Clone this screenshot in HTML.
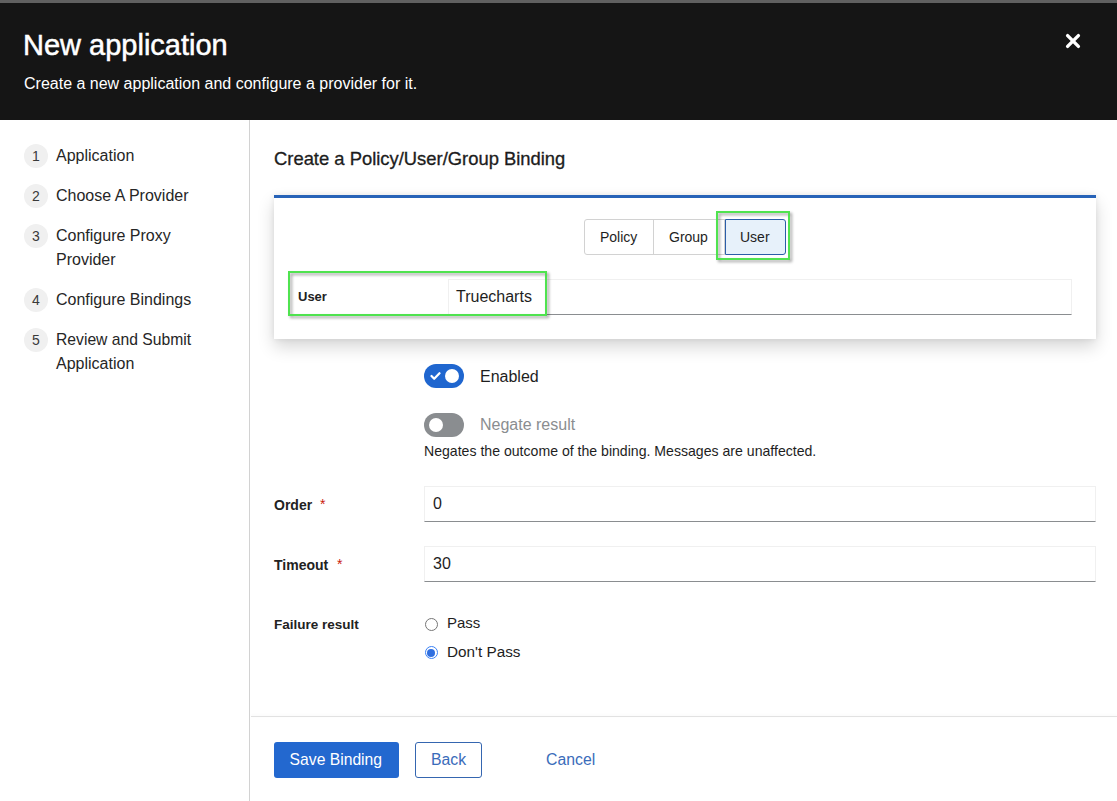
<!DOCTYPE html>
<html><head><meta charset="utf-8">
<style>
html,body{margin:0;padding:0;width:1117px;height:801px;overflow:hidden;background:#fff;font-family:"Liberation Sans",sans-serif;color:#1e1e1e;}
.a{position:absolute;}
.t{position:absolute;line-height:1;white-space:nowrap;}
#strip{left:0;top:0;width:1117px;height:3px;background:#606060;}
#hdr{left:0;top:3px;width:1117px;height:117px;background:#151515;}
#nav{left:0;top:120px;width:249px;height:681px;border-right:1px solid #d2d2d2;}
.num{position:absolute;left:24px;width:24px;height:24px;border-radius:50%;background:#f0f0f0;}
.nt{font-size:16px;color:#262626;left:56px;}
.dg{font-size:14px;color:#3a3a3a;}
#card{left:274px;top:195px;width:822px;height:144px;background:#fff;box-shadow:0 8px 16px 0 rgba(3,3,3,.16),0 0 6px 0 rgba(3,3,3,.08);}
#cardbar{left:274px;top:195px;width:822px;height:3px;background:#2763b8;}
.tg{position:absolute;top:219px;height:36px;box-sizing:border-box;border:1px solid #d2d2d2;background:#fff;}
.inp{position:absolute;box-sizing:border-box;background:#fff;border:1px solid #f0f0f0;border-bottom:1px solid #8a8d90;}
.green{position:absolute;box-sizing:border-box;border:2px solid #4fe34f;filter:drop-shadow(2.5px 2.5px 1.5px rgba(0,0,0,.38));}
.lbl{font-size:14px;font-weight:bold;color:#222;}
.req{color:#c9190b;font-size:14px;}
.sw{position:absolute;left:424px;width:40px;height:24px;border-radius:12px;}
.knob{position:absolute;top:4.7px;width:14.6px;height:14.6px;border-radius:50%;background:#fff;}
#footline{left:251px;top:716px;width:866px;height:1px;background:#e2e2e2;box-shadow:0 -1px 3px rgba(0,0,0,.05);}
.btn{position:absolute;top:742px;height:36px;box-sizing:border-box;border-radius:3px;}
</style></head><body>
<div class="a" id="strip"></div>
<div class="a" id="hdr"></div>
<div class="t" style="left:23px;top:30.5px;font-size:29px;color:#fff;-webkit-text-stroke:0.5px #fff;">New application</div>
<div class="t" style="left:24px;top:75.5px;font-size:16px;color:#fff;">Create a new application and configure a provider for it.</div>
<svg class="a" style="left:1065.1px;top:33.4px" width="16" height="16" viewBox="0 0 16 16"><path d="M2.6 2.6L13.4 13.4M13.4 2.6L2.6 13.4" stroke="#fff" stroke-width="3.4" stroke-linecap="round"/></svg>

<div class="a" id="nav"></div>
<div class="num" style="top:144px"></div><div class="t dg" style="left:32px;top:149px">1</div>
<div class="t nt" style="top:147.5px">Application</div>
<div class="num" style="top:184px"></div><div class="t dg" style="left:32px;top:189px">2</div>
<div class="t nt" style="top:187.5px">Choose A Provider</div>
<div class="num" style="top:224px"></div><div class="t dg" style="left:32px;top:229px">3</div>
<div class="t nt" style="top:227.5px">Configure Proxy</div>
<div class="t nt" style="top:251.5px">Provider</div>
<div class="num" style="top:288px"></div><div class="t dg" style="left:32px;top:293px">4</div>
<div class="t nt" style="top:291.5px">Configure Bindings</div>
<div class="num" style="top:328px"></div><div class="t dg" style="left:32px;top:333px">5</div>
<div class="t nt" style="top:331.7px;font-size:15.7px">Review and Submit</div>
<div class="t nt" style="top:355.5px">Application</div>

<div class="t" style="left:274px;top:149.5px;font-size:18.4px;-webkit-text-stroke:0.3px #151515;">Create a Policy/User/Group Binding</div>

<div class="a" id="card"></div>
<div class="a" id="cardbar"></div>
<div class="tg" style="left:584px;width:70px;border-radius:3px 0 0 3px;"></div>
<div class="tg" style="left:653px;width:72px;"></div>
<div class="tg" style="left:724.5px;width:61.5px;border:1px solid #2b5ea8;background:#e7f1fa;border-radius:0 3px 3px 0;"></div>
<div class="t" style="left:600px;top:230.3px;font-size:14px;">Policy</div>
<div class="t" style="left:669px;top:230.3px;font-size:14px;">Group</div>
<div class="t" style="left:740px;top:230.3px;font-size:14px;">User</div>
<div class="green" style="left:716.3px;top:211.3px;width:73.5px;height:48.6px;"></div>

<div class="inp" style="left:448px;top:279px;width:624px;height:36px;"></div>
<div class="t lbl" style="left:298px;top:290.4px;font-size:13px;">User</div>
<div class="t" style="left:456px;top:288.5px;font-size:16px;">Truecharts</div>
<div class="green" style="left:288px;top:271px;width:259px;height:45px;"></div>

<div class="sw" style="top:364px;background:#1f66cf;"><div class="knob" style="left:20.6px"></div>
<svg class="a" style="left:6px;top:7px" width="11" height="10" viewBox="0 0 11 10"><path d="M1.5 5L4.2 7.8L9.5 2.2" stroke="#fff" stroke-width="2.2" fill="none" stroke-linecap="round" stroke-linejoin="round"/></svg></div>
<div class="t" style="left:480px;top:368.5px;font-size:16px;">Enabled</div>
<div class="sw" style="top:413px;background:#8a8d90;"><div class="knob" style="left:4.8px"></div></div>
<div class="t" style="left:480px;top:417.3px;font-size:16px;color:#8a8d90;">Negate result</div>
<div class="t" style="left:424px;top:444.1px;font-size:14.1px;">Negates the outcome of the binding. Messages are unaffected.</div>

<div class="t lbl" style="left:274px;top:497.5px;">Order</div>
<div class="t req" style="left:320px;top:497px;">*</div>
<div class="inp" style="left:424px;top:486px;width:672px;height:36px;"></div>
<div class="t" style="left:433px;top:495.8px;font-size:16px;">0</div>

<div class="t lbl" style="left:274px;top:557.5px;">Timeout</div>
<div class="t req" style="left:337px;top:557px;">*</div>
<div class="inp" style="left:424px;top:546px;width:672px;height:36px;"></div>
<div class="t" style="left:433px;top:555.8px;font-size:16px;">30</div>

<div class="t lbl" style="left:274px;top:617.9px;font-size:13.5px;">Failure result</div>
<div class="a" style="left:425px;top:617.5px;width:11px;height:11px;border:1px solid #767676;border-radius:50%;"></div>
<div class="t" style="left:447px;top:614.6px;font-size:15px;">Pass</div>
<div class="a" style="left:424.8px;top:646.3px;width:11px;height:11px;border:1.2px solid #3b82f6;border-radius:50%;background:#fff;"><div class="a" style="left:1.5px;top:1.5px;width:8px;height:8px;border-radius:50%;background:#2f6fe0;"></div></div>
<div class="t" style="left:447px;top:643.5px;font-size:15.3px;">Don't Pass</div>

<div class="a" id="footline"></div>
<div class="btn" style="left:274px;width:125px;background:#2368cf;"></div>
<div class="t" style="left:289.6px;top:751.8px;font-size:15.7px;color:#fff;">Save Binding</div>
<div class="btn" style="left:415px;width:67px;border:1px solid #3566b0;"></div>
<div class="t" style="left:431px;top:751.8px;font-size:15.8px;color:#3a6cba;">Back</div>
<div class="t" style="left:546px;top:751.8px;font-size:15.8px;color:#3a6cba;">Cancel</div>
</body></html>
